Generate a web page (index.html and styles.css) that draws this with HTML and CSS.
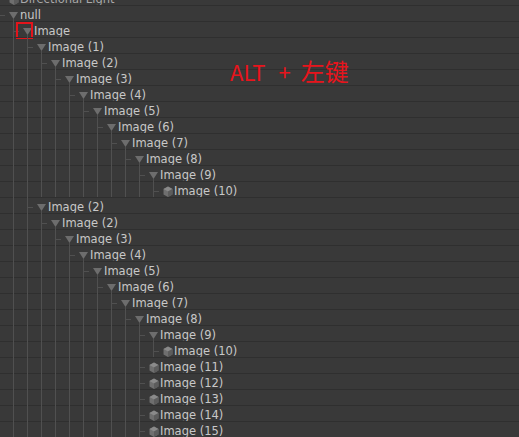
FILE: index.html
```html
<!DOCTYPE html>
<html>
<head>
<meta charset="utf-8">
<link rel="stylesheet" href="styles.css">
</head>
<body>
<div class="panel">
  <div class="tree">
    <div class="row dim"><i class="t"></i><svg class="ico" viewBox="0 0 10 16"><path d="M5 5.5L9.5 8V13.5L5 16L0.5 13.5V8Z" fill="#6f6f6f"/><path d="M5 5.5L9.5 8L5 10.5L0.5 8Z" fill="#8a8a8a"/><path d="M5 10.5L9.5 8V13.5L5 16Z" fill="#5c5c5c"/></svg><span class="lbl">Directional Light</span></div>
    <div class="row"><i class="t"></i><svg class="ico" viewBox="0 0 10 16"><path d="M0 7H9L4.5 14Z" fill="#6d6d6d"/><rect x="4" y="14" width="1" height="2" fill="#4e4e4e"/></svg><span class="lbl">null</span></div>
    <div class="row"><i class="v"></i><i class="t"></i><svg class="ico" viewBox="0 0 10 16"><path d="M0 7H9L4.5 14Z" fill="#6d6d6d"/><rect x="4" y="14" width="1" height="2" fill="#4e4e4e"/></svg><span class="lbl">Image</span><span class="mark"></span></div>
  </div>
</div>
<div class="note"><span>ALT</span><span class="plus">+</span><span class="cjk">左键</span></div>
<script src="tree.js"></script>
</body>
</html>
```

FILE: tree.js
```js
(function () {
  var rows = [
    [2, "Image (1)", 1], [3, "Image (2)", 1], [4, "Image (3)", 1], [5, "Image (4)", 1],
    [6, "Image (5)", 1], [7, "Image (6)", 1], [8, "Image (7)", 1], [9, "Image (8)", 1],
    [10, "Image (9)", 1], [11, "Image (10)", 0],
    [2, "Image (2)", 1], [3, "Image (2)", 1], [4, "Image (3)", 1], [5, "Image (4)", 1],
    [6, "Image (5)", 1], [7, "Image (6)", 1], [8, "Image (7)", 1], [9, "Image (8)", 1],
    [10, "Image (9)", 1], [11, "Image (10)", 0],
    [10, "Image (11)", 0], [10, "Image (12)", 0], [10, "Image (13)", 0],
    [10, "Image (14)", 0], [10, "Image (15)", 0]
  ];
  var tri = '<svg class="ico" viewBox="0 0 10 16"><path d="M0 7H9L4.5 14Z" fill="#6d6d6d"/><rect x="4" y="14" width="1" height="2" fill="#4e4e4e"/></svg>';
  var cube = '<svg class="ico" viewBox="0 0 10 16"><path d="M5 5.5L9.5 8V13.5L5 16L0.5 13.5V8Z" fill="#6f6f6f"/><path d="M5 5.5L9.5 8L5 10.5L0.5 8Z" fill="#8a8a8a"/><path d="M5 10.5L9.5 8V13.5L5 16Z" fill="#5c5c5c"/></svg>';
  var tree = document.querySelector(".tree");
  rows.forEach(function (r) {
    var html = "";
    for (var k = 0; k < r[0]; k++) html += '<i class="v"></i>';
    html += '<i class="t"></i>' + (r[2] ? tri : cube) + '<span class="lbl">' + r[1] + "</span>";
    var d = document.createElement("div");
    d.className = "row";
    d.innerHTML = html;
    tree.appendChild(d);
  });
})();
```

FILE: styles.css
```css
html, body {
  margin: 0;
  padding: 0;
  background: #393939;
  overflow: hidden;
}
body {
  width: 519px;
  height: 437px;
  position: relative;
}
.panel {
  height: 437px;
  overflow: hidden;
}
.tree {
  margin-top: -11px;
  margin-left: -8px;
}
.row {
  display: flex;
  align-items: flex-start;
  height: 16px;
  position: relative;
  background: linear-gradient(#2f2f2f, #2f2f2f) no-repeat 0 0 / 100% 1px;
}
.row i {
  display: block;
  flex: none;
  width: 14px;
  height: 16px;
}
.row .v {
  background: linear-gradient(#505050, #505050) no-repeat 7px 0 / 1px 100%;
}
.row .t {
  background:
    linear-gradient(#505050, #505050) no-repeat 7px 0 / 1px 100%,
    linear-gradient(#505050, #505050) no-repeat 7px 10px / 6px 1px;
}
.ico {
  display: block;
  flex: none;
  width: 10px;
  height: 16px;
  margin-left: 3px;
}
.lbl {
  margin-left: 1px;
  font-family: "DejaVu Sans", sans-serif;
  font-size: 11.5px;
  line-height: 20px;
  color: #c8c8c8;
  white-space: nowrap;
}
.dim .lbl {
  color: #a8a8a8;
}
.mark {
  position: absolute;
  left: 24px;
  top: 1px;
  width: 13px;
  height: 13px;
  border: 2px solid #e3141b;
}
.note {
  position: absolute;
  left: 230px;
  top: 60px;
  display: flex;
  align-items: baseline;
  font-family: "Noto Sans CJK SC", "Noto Sans", sans-serif;
  font-size: 22px;
  line-height: 22px;
  color: #e8141c;
  white-space: nowrap;
}
.note .plus {
  margin-left: 13px;
}
.note .cjk {
  margin-left: 10px;
  font-size: 24px;
}
```
